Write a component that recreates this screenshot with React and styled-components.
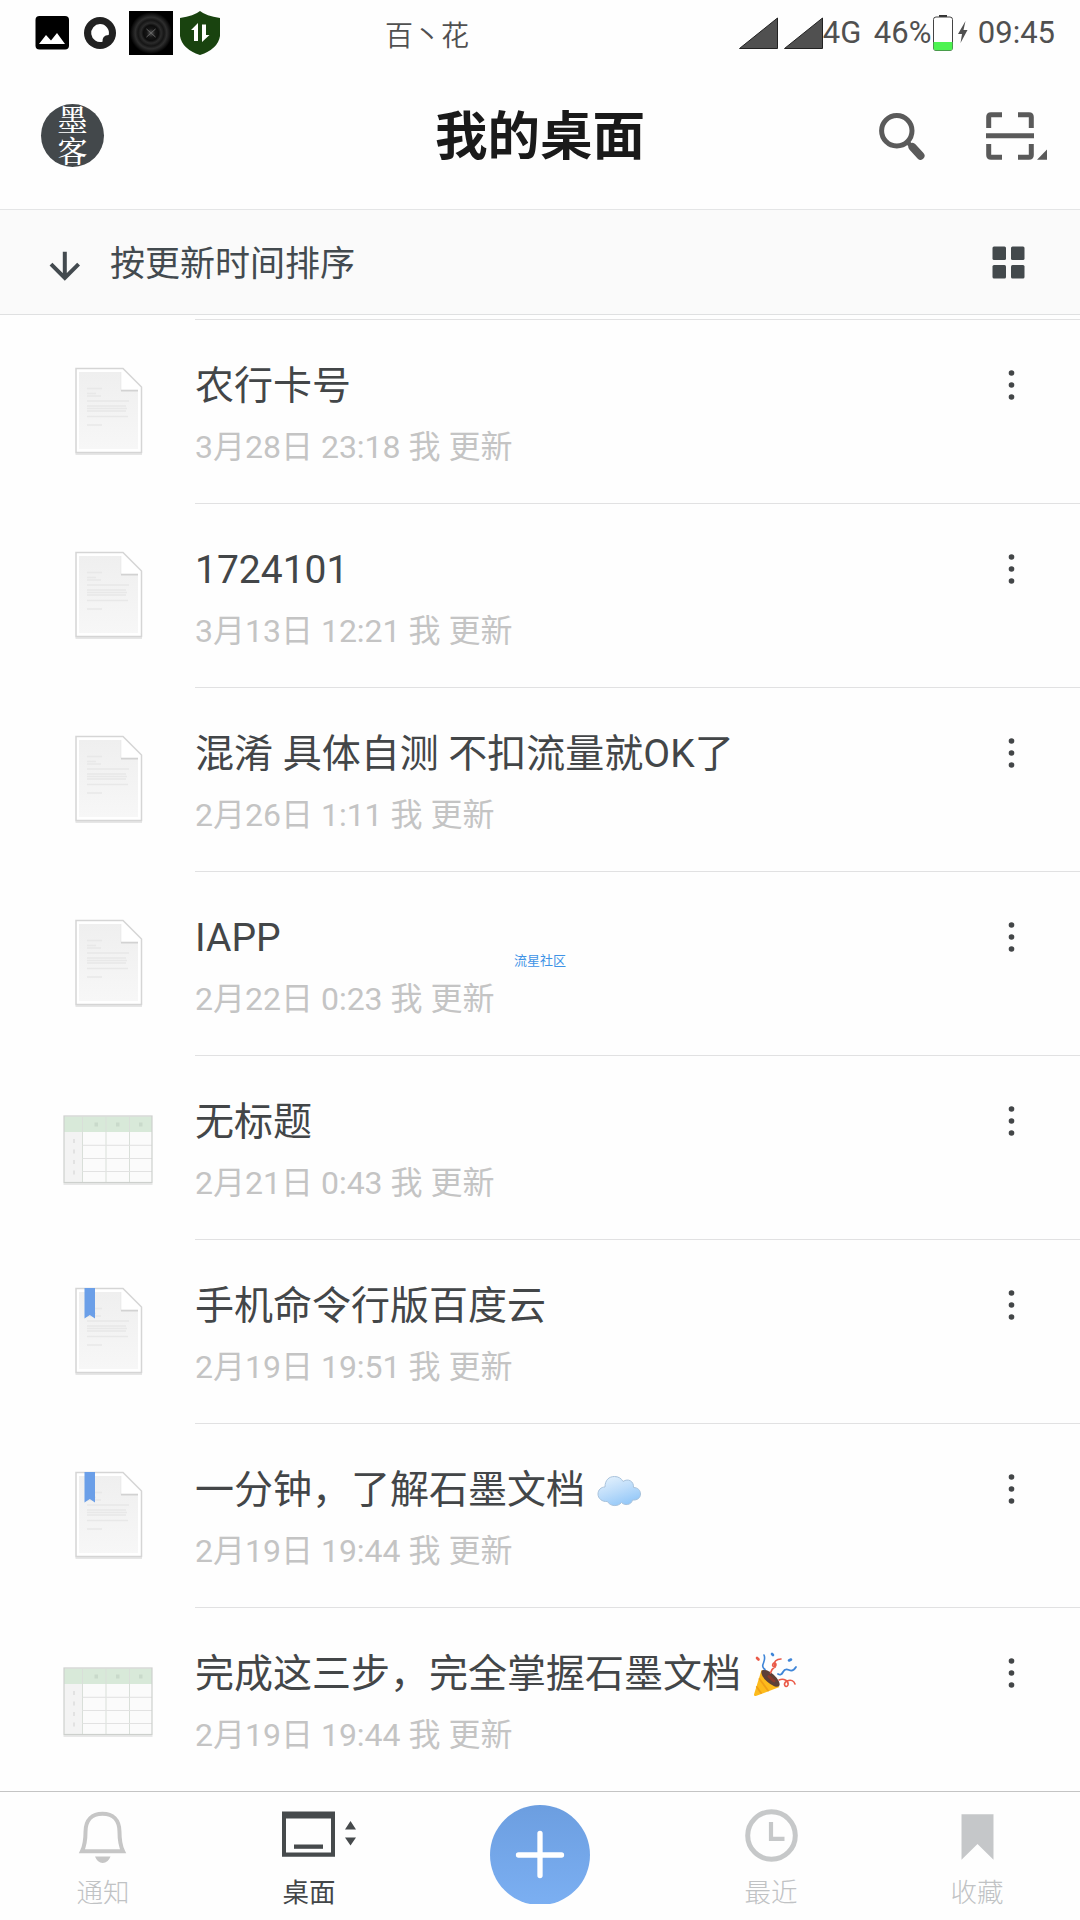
import React from 'react';
import styled, { createGlobalStyle } from 'styled-components';

const GlobalStyle = createGlobalStyle`
  * {
    box-sizing: border-box;
  }

  body {
    margin: 0;
    background-color: #fefefe;
    font-family: Roboto, "Noto Sans CJK SC", sans-serif;
    color: #434648;
  }

  svg {
    display: block;
    flex-shrink: 0;
  }
`

const Screen = styled.div`
  position: relative;
  display: flex;
  flex-direction: column;
  width: 1080px;
  height: 1920px;
  overflow: hidden;
`

const StatusBar = styled.div`
  display: grid;
  grid-template-columns: 385px 1fr auto;
  height: 62px;
  padding-right: 25px;
  color: #505050;
`

const StatusIcons = styled.div`
  display: flex;
  align-items: center;
  padding-left: 35px;
`

const Carrier = styled.div`
  padding-top: 17px;
  font-size: 28px;
  line-height: 40px;
  font-weight: 350;
`

const StatusRight = styled.div`
  display: flex;
  align-items: center;
  height: 65px;
  font-size: 31px;
  line-height: 40px;
`

const StatusText = styled.span`
  width: ${props => props.$width}px;
  white-space: nowrap;
`

const AppBar = styled.header`
  display: grid;
  grid-template-columns: 1fr auto 1fr;
  align-items: center;
  height: 147px;
  padding: 0 33px 0 41px;
`

const Avatar = styled.div`
  display: flex;
  justify-content: center;
  width: 63px;
  height: 63px;
  margin-bottom: 1px;
  border-radius: 50%;
  background-color: #43484b;
  color: #ffffff;
  font-family: "Noto Serif CJK SC", "Noto Sans CJK SC", serif;
  font-size: 30px;
  line-height: 31px;
  font-weight: 500;
`

const AvatarText = styled.span`
  width: 30px;
  margin-top: -1px;
  word-break: break-all;
`

const Title = styled.h1`
  margin: 3px 8px 0 0;
  font-size: 52.5px;
  line-height: 70px;
  font-weight: 700;
  color: #1a1a1a;
`

const Actions = styled.div`
  display: flex;
  align-items: center;
  justify-content: flex-end;
  gap: 60px;
`

const SortBar = styled.div`
  display: flex;
  align-items: center;
  height: 106px;
  padding: 2px 55px 0 48px;
  border-top: 1px solid #e4e5e6;
  border-bottom: 1px solid #dfe0e1;
  background-color: #fafafa;
`

const SortArrow = styled.div`
  padding-top: 5px;
`

const SortLabel = styled.span`
  flex: 1;
  margin-left: 28px;
  padding-top: 3px;
  font-size: 35px;
  line-height: 50px;
  color: #434a4f;
`

const List = styled.main`
  padding-top: 4px;
`

const Row = styled.div`
  display: grid;
  grid-template-columns: 195px 1fr;
  height: 184px;
`

const IconCell = styled.div`
  display: flex;
  align-items: center;
  padding: 1px 0 0 60px;
`

const RowBody = styled.div`
  display: flex;
  justify-content: space-between;
  padding: 38px 62px 0 0;
  border-top: 1px solid #e1e1e2;
`

const DocName = styled.div`
  display: flex;
  align-items: center;
  height: 54px;
  margin-top: 1px;
  font-size: 39px;
  line-height: 54px;
  white-space: pre;
`

const Emoji = styled.span`
  margin: 1px 0 0 2px;
`

const DocMeta = styled.div`
  margin-top: 12px;
  font-size: 32px;
  line-height: 44px;
  color: #c4c4c4;
`

const MoreButton = styled.button`
  height: 54px;
  padding: 0;
  border: none;
  background: none;
`

const TabBar = styled.nav`
  display: grid;
  grid-template-columns: 206px 206px 256px 206px 206px;
  height: 129px;
  border-top: 1px solid #c4c4c4;
`

const Tab = styled.div`
  display: flex;
  flex-direction: column;
  align-items: center;
  gap: 13px;
  padding-top: 13px;
  font-size: 26.5px;
  line-height: 30px;
  font-weight: ${props => props.$active ? 400 : 300};
  color: ${props => props.$active ? '#434648' : '#c0c2c4'};
`

const AddTab = styled.div`
  display: flex;
  justify-content: center;
  padding-top: 13px;
`

const Watermark = styled.div`
  position: absolute;
  top: 952px;
  left: 514px;
  font-size: 13px;
  line-height: 18px;
  color: #3f93e6;
`

const docs = [
  { name: '农行卡号', meta: '3月28日 23:18 我 更新', type: 'doc' },
  { name: '1724101', meta: '3月13日 12:21 我 更新', type: 'doc' },
  { name: '混淆 具体自测 不扣流量就OK了', meta: '2月26日 1:11 我 更新', type: 'doc' },
  { name: 'IAPP', meta: '2月22日 0:23 我 更新', type: 'doc' },
  { name: '无标题', meta: '2月21日 0:43 我 更新', type: 'sheet' },
  { name: '手机命令行版百度云', meta: '2月19日 19:51 我 更新', type: 'doc', marked: true },
  { name: '一分钟，了解石墨文档 ', emoji: 'cloud', meta: '2月19日 19:44 我 更新', type: 'doc', marked: true },
  { name: '完成这三步，完全掌握石墨文档 ', emoji: 'party', meta: '2月19日 19:44 我 更新', type: 'sheet' },
]

const Notifications = () => (
  <svg width="186" height="62" viewBox="35 0 186 62">
    <defs>
      <radialGradient id="disc">
        <stop offset="0" stopColor="#555" />
        <stop offset="0.2" stopColor="#161616" />
        <stop offset="0.36" stopColor="#0c0c0c" />
        <stop offset="0.48" stopColor="#2b2b2b" />
        <stop offset="0.62" stopColor="#151515" />
        <stop offset="0.75" stopColor="#2e2e2e" />
        <stop offset="1" stopColor="#000" />
      </radialGradient>
    </defs>
    <rect x="35.5" y="14" width="33.5" height="33.5" rx="4" fill="#000" />
    <path d="M39 42 L46 33 L51 38.5 L57 31 L65 42 Z" fill="#fff" />
    <circle cx="100" cy="31" r="16" fill="#212121" />
    <path d="M100 22 a9 9 0 0 1 8.7 11 q-3.500 0 -5 2 q-1.500 2 -1.200 4.700 a9 9 0 1 1 -2.500 -17.700 Z" fill="#fff" />
    <rect x="129" y="9" width="44" height="44" fill="#000" />
    <circle cx="151" cy="31" r="21" fill="url(#disc)" />
    <path d="M146.500 27 L155.500 35 M155.500 27 L146.500 35" stroke="#666" strokeWidth="1" />
    <path d="M200 9 Q206 14 220 16 V34 Q218 47 200 53 Q182 47 180 34 V16 Q194 14 200 9 Z" fill="#19430f" />
    <path d="M191 28 L198 21 V39 H194 V28 Z M202 22.500 H206 V33 H209.500 L202 40 Z" fill="#fff" />
  </svg>
)

const Signals = () => (
  <svg width="85" height="34" viewBox="738 15 85 34">
    <path d="M739.500 47.500 H777.500 V17 Z M784.500 47.500 H822.500 V17 Z" fill="#505050" stroke="#222" strokeWidth="1" />
  </svg>
)

const Battery = () => (
  <svg width="46" height="38" viewBox="933 13 46 38">
    <rect x="940" y="14" width="8" height="2.500" fill="#333" />
    <rect x="934.500" y="16" width="19" height="33.500" rx="2.500" fill="#fff" stroke="#444" />
    <path d="M934.500 41 H953.500 V47 Q953.500 49.500 951 49.500 H937 Q934.500 49.500 934.500 47 Z" fill="#4df351" />
    <path d="M966.500 20 L959 33 L963 33 L961.500 42 L968.500 29 L964.500 29 Z" fill="#505050" />
  </svg>
)

const SearchIcon = () => (
  <svg width="47" height="48" viewBox="879 112 47 48" fill="none" stroke="#5a5a5a">
    <circle cx="896.800" cy="130.800" r="15.200" strokeWidth="5" />
    <path d="M907.500 142 L912 147" strokeWidth="4.500" />
    <path d="M912.500 147 L920.500 155.800" strokeWidth="8" strokeLinecap="round" />
  </svg>
)

const ScanIcon = () => (
  <svg width="61" height="48" viewBox="986 112 61 48" fill="none" stroke="#5a5a5a" strokeWidth="5">
    <path d="M1002 114.800 H991 Q988.700 114.800 988.700 117 V128 M1018 114.800 H1029 Q1031.300 114.800 1031.300 117 V128" />
    <path d="M1002 157.300 H991 Q988.700 157.300 988.700 155 V144 M1018 157.300 H1029 Q1031.300 157.300 1031.300 155 V144" />
    <path d="M986 135.800 H1034" />
    <path d="M1037 159.700 L1047 149.500 V159.700 Z" fill="#5a5a5a" stroke="none" />
  </svg>
)

const ArrowDown = () => (
  <svg width="34" height="32" viewBox="48 250 34 32" fill="none" stroke="#434a4f" strokeWidth="4">
    <path d="M64.800 251.700 V278 M51 264.200 L64.800 278 L78.600 264.200" />
  </svg>
)

const GridIcon = () => (
  <svg width="33" height="34" viewBox="992 246 33 34" fill="#43494c">
    <rect x="992.500" y="246.500" width="13.500" height="13.500" rx="1.500" />
    <rect x="1011" y="246.500" width="13.500" height="13.500" rx="1.500" />
    <rect x="992.500" y="265" width="13.500" height="13.500" rx="1.500" />
    <rect x="1011" y="265" width="13.500" height="13.500" rx="1.500" />
  </svg>
)

const DocIcon = ({ marked }) => (
  <svg width="96" height="96" viewBox="0 0 96 96">
    <defs>
      <linearGradient id="paper" x1="0" y1="0" x2="0" y2="1">
        <stop offset="0" stopColor="#efefef" />
        <stop offset="1" stopColor="#f7f7f7" />
      </linearGradient>
    </defs>
    <path d="M15.500 90 H82" stroke="#e6e6e6" strokeWidth="2" />
    <path d="M16 4.500 H63 L81.500 23 V88.500 H16 Z" fill="#fff" stroke="#d5d5d5" strokeWidth="1.500" />
    <path d="M19 8 H60.500 V26 H78 V85 H19 Z" fill="url(#paper)" />
    <path d="M60.500 7 V26 H78 L61.500 8" fill="#fff" />
    <path d="M60.800 8 V26.300" stroke="#e6e6e6" strokeWidth="1" />
    <path d="M61 26.600 H78" stroke="#d2d2d2" strokeWidth="1.800" />
    <path
      d="M27 24.500 H42 M27 29.500 H36 M27 32 H41 M27 37 H69 M27 42 H66 M27 44.500 H67 M27 47 H66 M27 52.500 H68 M27 61 H42"
      stroke="#e8e8e8"
      strokeWidth="1.300"
    />
    {marked && <path d="M24.500 4 H35 V34.500 L29.800 31 L24.500 34.500 Z" fill="#6b9fe8" />}
  </svg>
)

const SheetIcon = () => (
  <svg width="96" height="96" viewBox="0 0 96 96">
    <path d="M3.500 84 H92.500" stroke="#e8e8e8" strokeWidth="2" />
    <rect x="4" y="16.500" width="88" height="66" fill="#fbfbfb" />
    <rect x="4" y="32" width="18.500" height="50" fill="#f3f3f3" />
    <rect x="4" y="16.500" width="88" height="15.500" fill="#d8e9d9" />
    <path d="M22.500 17 V82 M46 17 V82 M69.500 17 V82" stroke="#d9dfd9" strokeWidth="1" />
    <path d="M22.500 45.300 H92 M22.500 58.500 H92 M22.500 71.500 H92" stroke="#e2e2e2" strokeWidth="1" />
    <path d="M34.500 24.500 H38 M56 24.500 H59.500 M79 24.500 H82.500" stroke="#c9dacb" strokeWidth="4" />
    <path d="M14 39 V43 M14 49.500 V53.500 M14 60 V64 M14 70.500 V74.500" stroke="#e2e2e2" strokeWidth="2" />
    <rect x="4" y="16" width="88" height="66.500" fill="none" stroke="#cdd0cd" strokeWidth="1.200" />
  </svg>
)

const MoreIcon = () => (
  <svg width="12" height="32" viewBox="0 0 12 32" fill="#434648">
    <circle cx="5.500" cy="4" r="2.800" />
    <circle cx="5.500" cy="16" r="2.800" />
    <circle cx="5.500" cy="28" r="2.800" />
  </svg>
)

const CloudEmoji = () => (
  <svg width="45" height="32" viewBox="0 0 45 32">
    <defs>
      <linearGradient id="cloud" x1="0.200" y1="0" x2="0.700" y2="1">
        <stop offset="0" stopColor="#e3f1fd" />
        <stop offset="0.500" stopColor="#bcdcfa" />
        <stop offset="1" stopColor="#90c6f8" />
      </linearGradient>
    </defs>
    <path
      d="M8 12 C8 5 12 1.500 17.500 1.500 C21.500 1.500 24.500 3.500 26 6.500 C31 3 37 6 36.500 12.500 C41 12.500 43.500 15.500 43.500 19 C43.500 23 40 25.500 35.500 25 C34.500 30 27.500 31 24.500 27.500 C21 32 13 31.500 10.500 26.500 C5 27 1 23.500 1 19 C1 15 4 12 8 12 Z"
      fill="url(#cloud)"
      stroke="#a9c3dc"
      strokeWidth="1"
    />
  </svg>
)

const PartyEmoji = () => (
  <svg width="45" height="45" viewBox="0 0 45 45" fill="none" strokeLinecap="round">
    <path d="M8.500 18 L1 42.500 Q0.800 44.500 2.800 44 L26.500 35 Z" fill="#fdbb1c" />
    <path d="M6.500 27 L15 38.500 M3.800 35 L8 41" stroke="#f0a016" strokeWidth="1.800" />
    <ellipse cx="17.500" cy="26.300" rx="11.500" ry="4.800" transform="rotate(42 17.500 26.300)" fill="#5d4037" />
    <path d="M16 24.500 L21 29" stroke="#8a3a2c" strokeWidth="3" />
    <path d="M12 17.500 C6 13 14 10 11 3" stroke="#3f86d8" strokeWidth="1.600" />
    <path d="M17.500 21 C19 14 24 16 23 12 C21 8 17 15 22 15 C20 9 24 7 28 7" stroke="#ea5a48" strokeWidth="1.600" />
    <path d="M25 22 Q28 24 30 20 T36 18 T43 15" stroke="#3f86d8" strokeWidth="1.800" />
    <path d="M26 28 C31 26 36 29 35 33 C33 37 29 32 34 29 C38 27 41 29 42 32" stroke="#ea5a48" strokeWidth="1.600" />
    <path d="M4 6 L5.500 7.500" stroke="#ea5a48" strokeWidth="2.600" />
    <path d="M19 2 L20 3 M36 8.500 L38 7.500" stroke="#3f86d8" strokeWidth="2.600" />
  </svg>
)

const emojis = {
  cloud: <CloudEmoji />,
  party: <PartyEmoji />,
}

const BellIcon = () => (
  <svg width="60" height="60" viewBox="73 1805 60 60">
    <path
      d="M82 1851.200 Q85.500 1844 85.500 1832 C85.500 1819.500 92.500 1813.700 102.500 1813.700 C112.500 1813.700 119.500 1819.500 119.500 1832 Q119.500 1844 123 1851.200 Z"
      fill="none"
      stroke="#c6c6c6"
      strokeWidth="4"
    />
    <path d="M95 1856.500 H110.500 Q108 1863 102.700 1863 Q97.500 1863 95 1856.500 Z" fill="#c6c6c6" />
  </svg>
)

const DesktopIcon = () => (
  <svg width="96" height="60" viewBox="261 1805 96 60" fill="#464a4c">
    <path fillRule="evenodd" d="M282 1811.500 H335 V1856.700 H282 Z M286 1818.500 V1852.500 H331 V1818.500 Z" />
    <rect x="294" y="1844.500" width="29" height="4.300" />
    <path d="M345 1829.500 H356 L350.500 1821 Z M345 1837.500 H356 L350.500 1845.500 Z" />
  </svg>
)

// the circle is cut flat at the bottom edge
const AddIcon = () => (
  <svg width="102" height="99" viewBox="489 1805 102 99">
    <defs>
      <linearGradient id="add" x1="0" y1="0" x2="0" y2="1">
        <stop offset="0" stopColor="#6c9ee0" />
        <stop offset="1" stopColor="#7baff2" />
      </linearGradient>
    </defs>
    <circle cx="540" cy="1855" r="50" fill="url(#add)" />
    <path d="M518.500 1855 H561.500 M540 1833.500 V1875.500" stroke="#fff" strokeWidth="5.300" strokeLinecap="round" />
  </svg>
)

const ClockIcon = () => (
  <svg width="60" height="60" viewBox="741 1805 60 60" fill="none" stroke="#c6c8c9">
    <circle cx="771.500" cy="1835.500" r="23.800" strokeWidth="5" />
    <path d="M771 1822 V1838.800 H784.500" strokeWidth="4.200" />
  </svg>
)

const BookmarkIcon = () => (
  <svg width="60" height="60" viewBox="947 1805 60 60">
    <path d="M961.500 1814.300 H993.500 V1859.700 L977.500 1844 L961.500 1859.700 Z" fill="#c5c7c9" />
  </svg>
)

const App = () => {
  const docList = docs.map(doc => (
    <Row key={doc.name}>
      <IconCell>
        {doc.type === 'sheet' ? <SheetIcon /> : <DocIcon marked={doc.marked} />}
      </IconCell>
      <RowBody>
        <div>
          <DocName>
            {doc.name}
            {doc.emoji && <Emoji>{emojis[doc.emoji]}</Emoji>}
          </DocName>
          <DocMeta>{doc.meta}</DocMeta>
        </div>
        <MoreButton><MoreIcon /></MoreButton>
      </RowBody>
    </Row>
  ))

  return (
    <Screen>
      <GlobalStyle />
      <StatusBar>
        <StatusIcons><Notifications /></StatusIcons>
        <Carrier>百丶花</Carrier>
        <StatusRight>
          <Signals />
          <StatusText $width={51}>4G</StatusText>
          <StatusText $width={58}>46%</StatusText>
          <Battery />
          <span>09:45</span>
        </StatusRight>
      </StatusBar>
      <AppBar>
        <Avatar>
          <AvatarText>墨客</AvatarText>
        </Avatar>
        <Title>我的桌面</Title>
        <Actions>
          <SearchIcon />
          <ScanIcon />
        </Actions>
      </AppBar>
      <SortBar>
        <SortArrow><ArrowDown /></SortArrow>
        <SortLabel>按更新时间排序</SortLabel>
        <GridIcon />
      </SortBar>
      <List>{docList}</List>
      <TabBar>
        <Tab><BellIcon />通知</Tab>
        <Tab $active><DesktopIcon />桌面</Tab>
        <AddTab><AddIcon /></AddTab>
        <Tab><ClockIcon />最近</Tab>
        <Tab><BookmarkIcon />收藏</Tab>
      </TabBar>
      <Watermark>流星社区</Watermark>
    </Screen>
  )
}

export default App;
